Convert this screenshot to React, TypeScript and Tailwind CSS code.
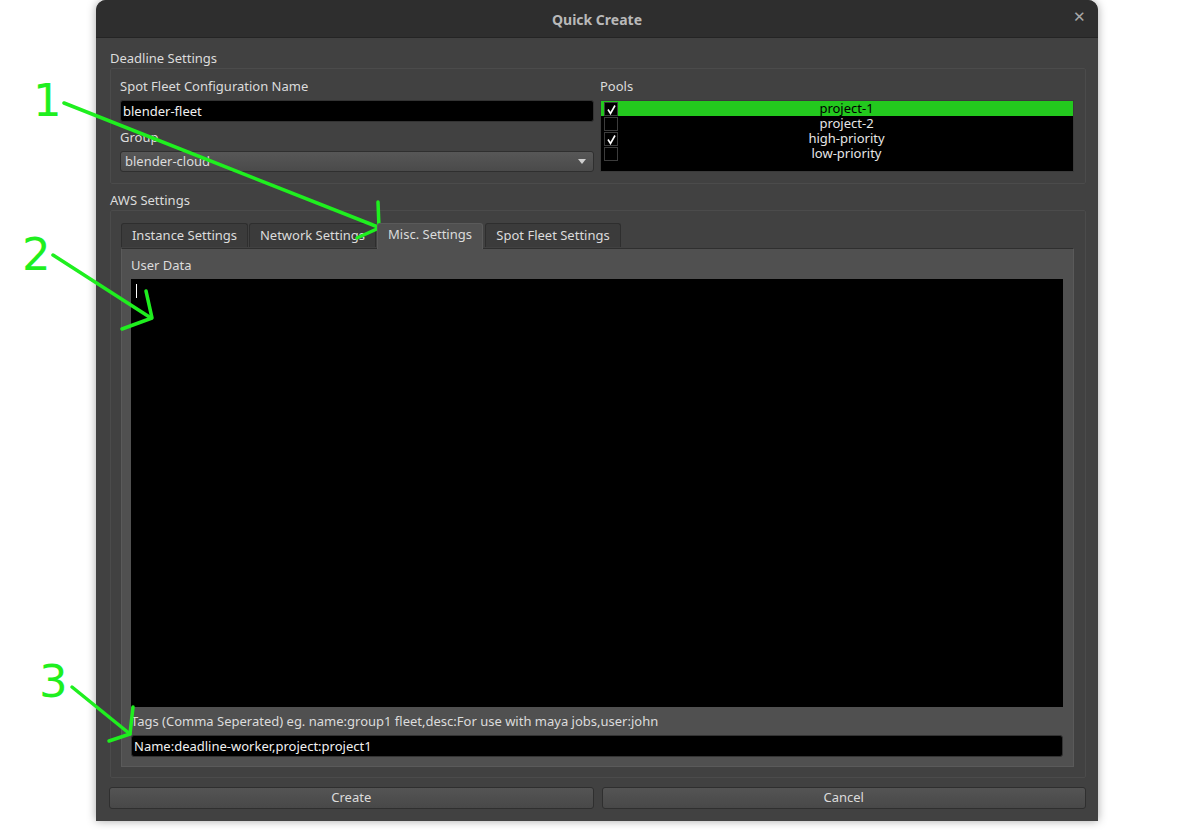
import React from 'react';

const pools = [
  { name: 'project-1', checked: true, selected: true },
  { name: 'project-2', checked: false, selected: false },
  { name: 'high-priority', checked: true, selected: false },
  { name: 'low-priority', checked: false, selected: false },
];

const tabs = [
  { label: 'Instance Settings', w: 'w-[127px]', active: false },
  { label: 'Network Settings', w: 'w-[127px]', active: false },
  { label: 'Misc. Settings', w: 'w-[106px]', active: true },
  { label: 'Spot Fleet Settings', w: 'w-[136px]', active: false },
];

function Annotations() {
  const g = '#1fef1f';
  return (
    <svg className="absolute left-0 top-0 pointer-events-none" width="1195" height="830">
      <g stroke={g} strokeWidth="3.5" fill="none" strokeLinecap="round" strokeLinejoin="round">
        <path d="M64 103 L378 227" />
        <path d="M378 202 L379 228 L357 238" />
        <path d="M53 255 L151 318" />
        <path d="M146 291 L152 318 L122 329" />
        <path d="M72 687 L130 734" />
        <path d="M133 707 L130 734 L109 741" />
      </g>
      <g fill={g} fontFamily="'DejaVu Sans', sans-serif" fontSize="45">
        <text x="33" y="116">1</text>
        <text x="22" y="270">2</text>
        <text x="39" y="697">3</text>
      </g>
    </svg>
  );
}

function Check() {
  return (
    <svg width="11" height="11" viewBox="0 0 11 11" className="absolute left-[1px] top-[1px]">
      <path d="M2 5.5 L4.5 9.5 L9 1.5" stroke="#ffffff" strokeWidth="1.6" fill="none" />
    </svg>
  );
}

export default function App() {
  return (
    <div className="relative w-[1195px] h-[830px] bg-white overflow-hidden font-['Noto_Sans',sans-serif] text-[13px] text-[#dcdcdc]">
      <div className="ml-[96px] w-[1002px] h-[821px] rounded-t-[10px] bg-[#414141] flex flex-col shadow-[0_0_10px_rgba(0,0,0,0.35)] overflow-hidden">
        <div className="relative h-[38px] shrink-0 bg-[#2e2e2e] border-b border-[#242424] flex items-center justify-center pt-[1px]">
          <span className="font-bold text-[14px] text-[#b9b9b9]">Quick Create</span>
          <span className="absolute right-[12px] top-[9px] text-[15px] text-[#a8a8a8] leading-none">✕</span>
        </div>
        <div className="flex flex-col pl-[14px] pr-[12px]">
          <div className="h-[16px] mt-[12px] leading-[16px]">Deadline Settings</div>
          <div className="mt-[2px] h-[116px] border border-[#4b4b4b] rounded-[2px] grid grid-cols-2 gap-[6px] pl-[9px] pr-[11px]">
            <div className="flex flex-col">
              <div className="mt-[9px] h-[16px] leading-[16px]">Spot Fleet Configuration Name</div>
              <div className="mt-[6px] h-[22px] bg-black border border-[#333] rounded-[3px] px-[2px] leading-[20px] text-[#f0f0f0]">blender-fleet</div>
              <div className="mt-[7px] h-[16px] leading-[16px]">Group</div>
              <div className="mt-[6px] h-[21px] rounded-[3px] border border-[#2f2f2f] bg-gradient-to-b from-[#575757] to-[#4a4a4a] flex items-center justify-between pl-[4px] pr-[7px]">
                <span className="leading-[19px]">blender-cloud</span>
                <svg width="8" height="5" viewBox="0 0 8 5"><path d="M0 0 L8 0 L4 5 Z" fill="#cfcfcf" /></svg>
              </div>
            </div>
            <div className="flex flex-col">
              <div className="mt-[9px] h-[16px] leading-[16px]">Pools</div>
              <div className="mt-[6px] h-[72px] bg-black border border-[#3a3a3a] flex flex-col">
                {pools.map((p) => (
                  <div key={p.name} className={`h-[15px] flex items-center ${p.selected ? 'bg-[#23c91e] text-black' : 'text-[#e6e6e6]'}`}>
                    <div className="relative ml-[3px] w-[14px] h-[14px] border border-[#3c3c3c] bg-black shrink-0">
                      {p.checked && <Check />}
                    </div>
                    <div className="flex-1 text-center leading-[15px] pl-[2px]">{p.name}</div>
                  </div>
                ))}
              </div>
            </div>
          </div>
          <div className="h-[16px] mt-[8px] leading-[16px]">AWS Settings</div>
          <div className="mt-[2px] h-[568px] border border-[#4b4b4b] rounded-[2px] flex flex-col pl-[10px] pr-[11px] pt-[11px]">
            <div className="flex items-end h-[26px] gap-[1px]">
              {tabs.map((t) => (
                <div
                  key={t.label}
                  className={`${t.w} flex items-center justify-center border border-b-0 rounded-t-[3px] ${
                    t.active
                      ? 'h-[26px] pb-[3px] bg-[#505050] border-[#5a5a5a] -mb-px relative z-10 mr-[1px]'
                      : 'h-[24px] bg-[#3b3b3b] border-[#2e2e2e] mb-[1px]'
                  }`}
                >
                  {t.label}
                </div>
              ))}
            </div>
            <div className="h-[519px] bg-[#505050] border border-[#5a5a5a] border-t-[#2f2f2f] flex flex-col pl-[9px] pr-[10px]">
              <div className="mt-[8px] h-[16px] leading-[16px]">User Data</div>
              <div className="relative mt-[6px] h-[428px] bg-black">
                <div className="absolute left-[5px] top-[5px] w-px h-[14px] bg-white" />
              </div>
              <div className="mt-[6px] h-[16px] leading-[16px]">Tags (Comma Seperated) eg. name:group1 fleet,desc:For use with maya jobs,user:john</div>
              <div className="mt-[6px] h-[22px] bg-black border border-[#333] rounded-[3px] px-[2px] leading-[20px] text-[#f0f0f0]">Name:deadline-worker,project:project1</div>
            </div>
          </div>
          <div className="mt-[9px] grid grid-cols-2 gap-[8px] -ml-[1px]">
            <div className="h-[22px] rounded-[3px] border border-[#2f2f2f] bg-gradient-to-b from-[#545454] to-[#484848] flex items-center justify-center">Create</div>
            <div className="h-[22px] rounded-[3px] border border-[#2f2f2f] bg-gradient-to-b from-[#545454] to-[#484848] flex items-center justify-center">Cancel</div>
          </div>
        </div>
      </div>
      <Annotations />
    </div>
  );
}
